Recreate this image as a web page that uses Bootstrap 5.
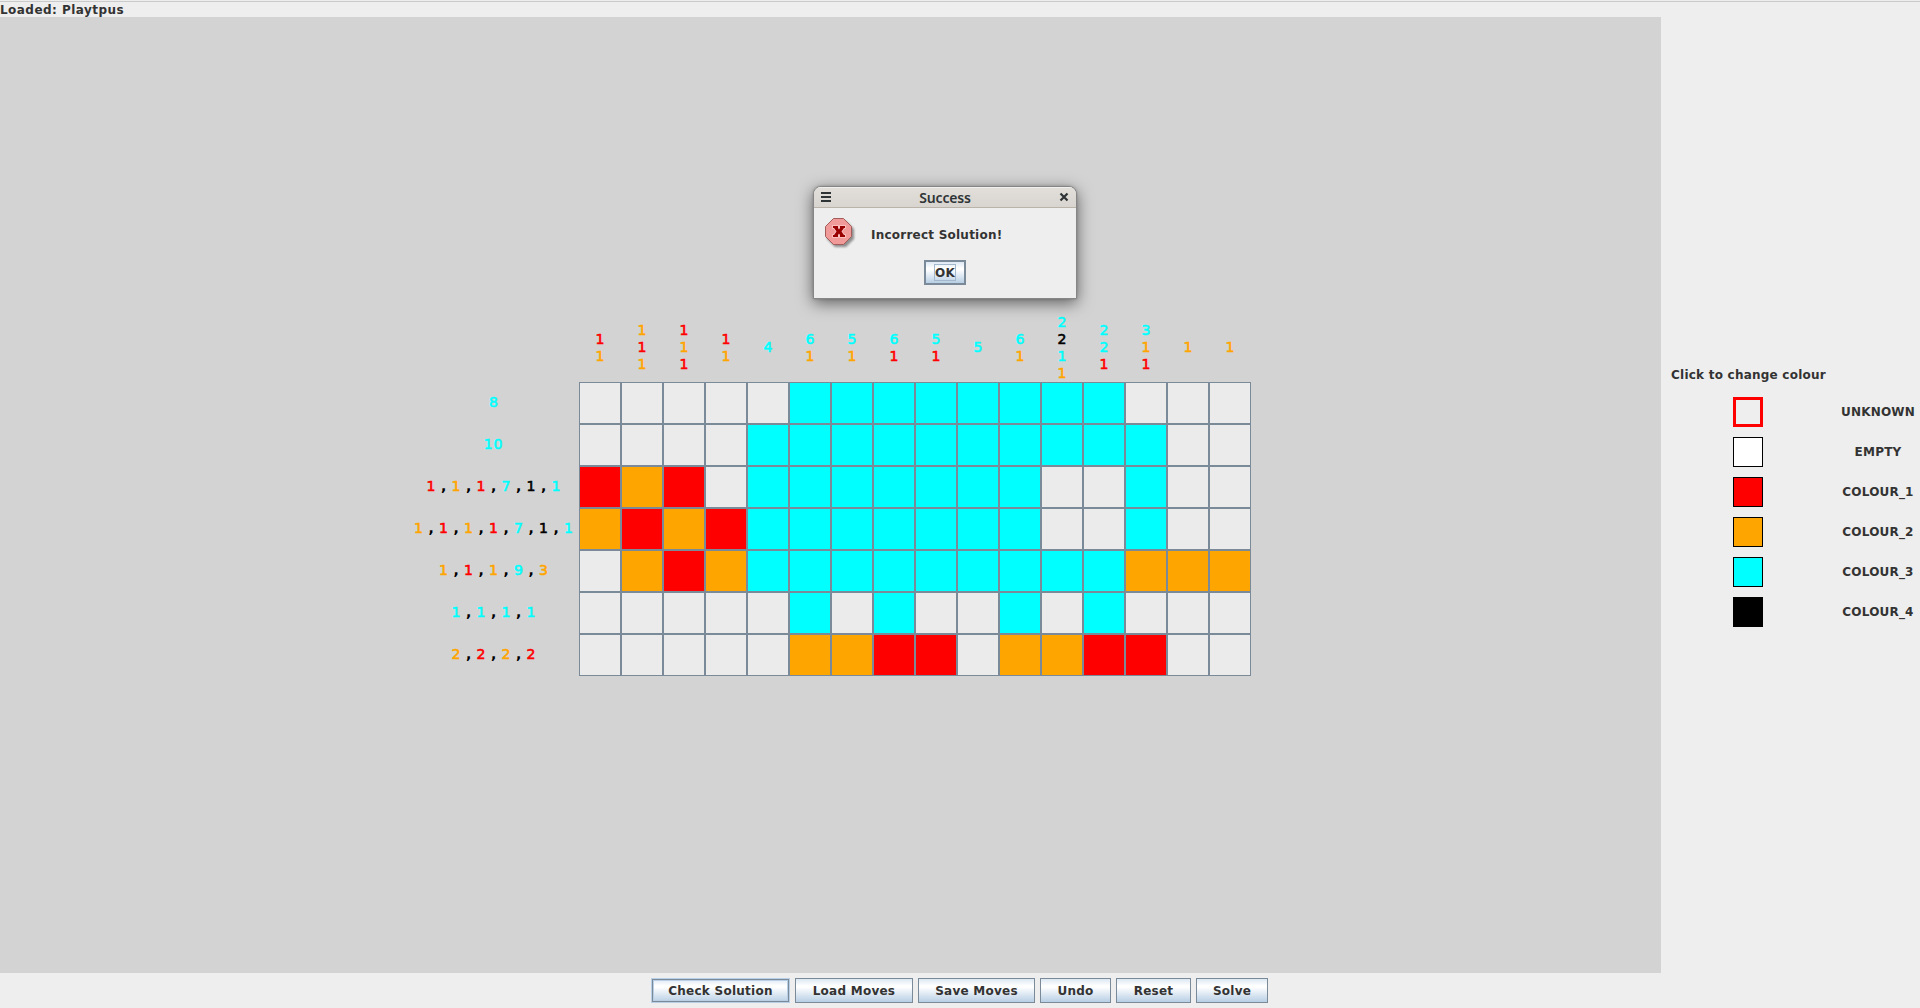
<!DOCTYPE html>
<html lang="en">
<head>
<meta charset="utf-8">
<title>Nonogram</title>
<link href="https://cdn.jsdelivr.net/npm/bootstrap@5.3.0/dist/css/bootstrap.min.css" rel="stylesheet">
<style>
  :root { --edge: #7a8a99; --c1: #ff0000; --c2: #ffa500; --c3: #00ffff; --c4: #000000; }
  body { background: #eeeeee; color: #333333; font: bold 12px/15px "DejaVu Sans", sans-serif; }
  .status-line { height: 17px; padding-top: 3px; box-shadow: inset 0 1px #ededed, inset 0 2px #cacaca; letter-spacing: .46px; }
  .play-area { width: 1661px; background: #d3d3d3; }
  .board { margin: 290px 0 0 408px; width: 843px; }
  .top-clues { height: 75px; padding: 6px 0 0 171px; }
  .top-clue { width: 42px; line-height: 17px; font-size: 14px; }
  .side-clue { width: 171px; gap: 5px; font-size: 14px; padding-bottom: 1px; }
  .side-clue i { font-style: normal; text-align: center; width: 10px; }
  .side-clue i.long { width: 20px; letter-spacing: .8px; }
  .side-clue i.sep { width: 5px; color: #000; font-size: 14px; }
  .board-row { height: 42px; }
  .tile { width: 42px; height: 42px; border: 1px solid var(--edge); background: #ebebeb; }
  .t1 { background: var(--c1); } .t2 { background: var(--c2); } .t3 { background: var(--c3); }
  .k1, .k2, .k3, .k4 { font-weight: 400; -webkit-text-stroke: .6px; }
  .k1 { color: var(--c1); } .k2 { color: var(--c2); } .k3 { color: var(--c3); } .k4 { color: var(--c4); }
  .palette { padding: 351px 0 0 10px; }
  .palette-title { margin-bottom: 14px; letter-spacing: .23px; height: 15px; white-space: nowrap; }
  .palette-row { height: 30px; margin-bottom: 10px; padding-left: 62px; }
  .swatch { width: 30px; height: 30px; border: 1px solid #000; }
  .swatch.active { border: 3px solid red; }
  .swatch-name { width: 76px; margin-left: 77px; text-align: center; white-space: nowrap; letter-spacing: .2px; }
  .tool-strip { height: 35px; gap: 5px; padding: 5px 1px 0 0; }
  .btn.metal { --bs-btn-padding-x: 0; --bs-btn-padding-y: 0; height: 25px; border: 1px solid var(--edge); border-radius: 0;
    font: bold 12px/22px "DejaVu Sans", sans-serif; color: #333; white-space: nowrap; letter-spacing: .25px;
    background: linear-gradient(#dde8f3 0, #ffffff 30%, #ffffff 35%, #b8cfe5 100%); }
  .btn.metal.focused { border: 1px solid #b8cfe5; box-shadow: inset 0 0 0 1px var(--edge), inset 0 0 0 2px #b8cfe5; }
  .w-check { width: 139px; } .w-load { width: 118px; } .w-save { width: 117px; }
  .w-undo { width: 71px; } .w-reset { width: 75px; } .w-solve { width: 72px; }
  .dialog-box { left: 813px; top: 186px; width: 264px; height: 113px; background: #eee; border: 1px solid #868686; border-radius: 8px 8px 0 0;
    box-shadow: 0 4px 16px rgba(0,0,0,.55), 0 0 3px rgba(0,0,0,.2); }
  .dialog-bar { height: 21px; padding: 0 7px; border-bottom: 1px solid #b9b3a9; border-radius: 7px 7px 0 0;
    background: linear-gradient(#fff 0, #e2dfdb 1px, #d8d4cf 100%); color: #2e3436; }
  .dialog-title { font: 600 14px/20px "Noto Sans", sans-serif; letter-spacing: -.15px; padding-top: 1px; }
  .dialog-msg { height: 52px; padding: 9px 0 0 10px; }
  .dialog-text { margin: 11px 0 0 15px; letter-spacing: .23px; }
  .btn.metal.ok { width: 42px; border: 2px solid var(--edge); padding: 2px 0; }
  .ok span { display: block; width: 22px; height: 17px; margin: 0 auto; border: 1px solid #a3b8cc; line-height: 16px; }
</style>
<script src="https://cdn.jsdelivr.net/npm/bootstrap@5.3.0/dist/js/bootstrap.bundle.min.js"></script>
</head>
<body class="vh-100 overflow-hidden d-flex flex-column">
  <header class="status-line flex-shrink-0">Loaded: Playtpus</header>
  <main class="d-flex flex-grow-1">
    <section class="play-area flex-shrink-0">
      <div class="board" id="board"><div class="top-clues d-flex" id="topClues"></div></div>
    </section>
    <aside class="palette flex-grow-1">
      <div class="palette-title">Click to change colour</div>
      <div class="palette-row d-flex align-items-center"><div class="swatch active"></div><div class="swatch-name">UNKNOWN</div></div>
      <div class="palette-row d-flex align-items-center"><div class="swatch bg-white"></div><div class="swatch-name">EMPTY</div></div>
      <div class="palette-row d-flex align-items-center"><div class="swatch t1"></div><div class="swatch-name">COLOUR_1</div></div>
      <div class="palette-row d-flex align-items-center"><div class="swatch t2"></div><div class="swatch-name">COLOUR_2</div></div>
      <div class="palette-row d-flex align-items-center"><div class="swatch t3"></div><div class="swatch-name">COLOUR_3</div></div>
      <div class="palette-row d-flex align-items-center"><div class="swatch bg-black"></div><div class="swatch-name">COLOUR_4</div></div>
    </aside>
  </main>
  <footer class="tool-strip d-flex justify-content-center flex-shrink-0">
    <button class="btn metal focused w-check">Check Solution</button>
    <button class="btn metal w-load">Load Moves</button>
    <button class="btn metal w-save">Save Moves</button>
    <button class="btn metal w-undo">Undo</button>
    <button class="btn metal w-reset">Reset</button>
    <button class="btn metal w-solve">Solve</button>
  </footer>

  <div class="dialog-box position-absolute" role="dialog">
    <div class="dialog-bar d-flex align-items-center justify-content-between">
      <svg width="10" height="10" viewBox="0 0 10 10" fill="#2e3436"><path d="M0 0h10v2H0zM0 4h10v2H0zM0 8h10v2H0z"/></svg>
      <span class="dialog-title">Success</span>
      <svg width="10" height="10" viewBox="0 0 10 10" stroke="#2e3436" stroke-width="2.2"><path d="M1.500 1.500l7 7M8.500 1.500l-7 7"/></svg>
    </div>
    <div class="dialog-msg d-flex">
      <svg width="32" height="32" viewBox="0 0 32 32">
        <defs><filter id="soft" x="-20%" y="-20%" width="150%" height="150%"><feGaussianBlur stdDeviation="1.3"/></filter></defs>
        <path d="M11 4h11l8 8v10l-8 8H11l-8-8V12z" fill="#000" opacity=".4" filter="url(#soft)"/>
        <path d="M9.500 1.500h10l8 8v10l-8 8h-10l-8-8v-10z" fill="#f09a99" stroke="#a25c5a"/>
        <path d="M9 9h5v2l1 1.500L16 11V9h5v2h-1l-2.500 3.500L20 18h1v2h-5v-2l-1-1.500L14 18v2H9v-2h1l2.500-3.500L10 11H9z" fill="#990000" stroke="#ffcccc" stroke-width="1.500" paint-order="stroke"/>
      </svg>
      <div class="dialog-text">Incorrect Solution!</div>
    </div>
    <div class="text-center"><button class="btn metal ok"><span>OK</span></button></div>
  </div>

<script>
  // Clues are lists of [number, colour]; tiles use 0 for an unknown cell.
  const tops = [
    [[1,1],[1,2]], [[1,2],[1,1],[1,2]], [[1,1],[1,2],[1,1]], [[1,1],[1,2]], [[4,3]], [[6,3],[1,2]],
    [[5,3],[1,2]], [[6,3],[1,1]], [[5,3],[1,1]], [[5,3]], [[6,3],[1,2]], [[2,3],[2,4],[1,3],[1,2]],
    [[2,3],[2,3],[1,1]], [[3,3],[1,2],[1,1]], [[1,2]], [[1,2]]
  ];
  const sides = [
    [[8,3]], [[10,3]], [[1,1],[1,2],[1,1],[7,3],[1,4],[1,3]],
    [[1,2],[1,1],[1,2],[1,1],[7,3],[1,4],[1,3]], [[1,2],[1,1],[1,2],[9,3],[3,2]],
    [[1,3],[1,3],[1,3],[1,3]], [[2,2],[2,1],[2,2],[2,1]]
  ];
  const tiles = ["0000033333333000", "0000333333333300", "1210333333300300", "2121333333300300",
                 "0212333333333222", "0000030300303000", "0000022110221100"];
  document.getElementById("topClues").innerHTML = tops.map(c =>
    `<div class="top-clue d-flex flex-column justify-content-center text-center">` +
    c.map(([n, k]) => `<div class="k${k}">${n}</div>`).join("") + `</div>`).join("");
  document.getElementById("board").insertAdjacentHTML("beforeend", tiles.map((row, r) =>
    `<div class="board-row d-flex"><div class="side-clue d-flex justify-content-center align-items-center">` +
    sides[r].map(([n, k]) => `<i class="k${k}${n > 9 ? " long" : ""}">${n}</i>`).join(`<i class="sep">,</i>`) +
    `</div>` + [...row].map(t => `<div class="tile t${t}"></div>`).join("") + `</div>`).join(""));
</script>
</body>
</html>
